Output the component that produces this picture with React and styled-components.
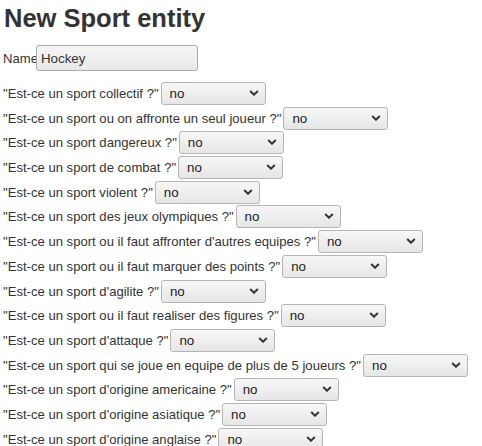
import React, { useState } from 'react'
import styled, { createGlobalStyle } from 'styled-components'

const QUESTIONS = [
  'Est-ce un sport collectif ?',
  'Est-ce un sport ou on affronte un seul joueur ?',
  'Est-ce un sport dangereux ?',
  'Est-ce un sport de combat ?',
  'Est-ce un sport violent ?',
  'Est-ce un sport des jeux olympiques ?',
  "Est-ce un sport ou il faut affronter d'autres equipes ?",
  'Est-ce un sport ou il faut marquer des points ?',
  "Est-ce un sport d'agilite ?",
  'Est-ce un sport ou il faut realiser des figures ?',
  "Est-ce un sport d'attaque ?",
  'Est-ce un sport qui se joue en equipe de plus de 5 joueurs ?',
  "Est-ce un sport d'origine americaine ?",
  "Est-ce un sport d'origine asiatique ?",
  "Est-ce un sport d'origine anglaise ?",
]

const GlobalStyle = createGlobalStyle`
  html, body {
    margin: 0;
    padding: 0;
    overflow: hidden;
    background: #fff;
  }
  body {
    font-family: "Liberation Sans", Arial, sans-serif;
    color: #333;
  }
`

const Page = styled.div`
  padding: 4px 3px 0 3px;
`

const Title = styled.h1`
  margin: 0 0 13px 1px;
  font-size: 25.5px;
  font-weight: bold;
  color: #333;
  line-height: 28px;
`

const Field = styled.div`
  display: flex;
  align-items: center;
  font-size: 13.1px;
  white-space: pre;
  margin-bottom: ${props => props.spacing || 1.7}px;
`

const Label = styled.span`
  margin-right: ${props => props.gap || 0}px;
`

const TextInput = styled.input`
  box-sizing: border-box;
  width: 162px;
  height: 26px;
  padding: 0 4px;
  margin: 0 0 0 -2px;
  border: 1px solid #aaa;
  border-radius: 3px;
  background: linear-gradient(#f6f6f6, #e9e9e9);
  font-family: "Liberation Sans", Arial, sans-serif;
  font-size: 13.33px;
  color: #333;
  outline: none;
  caret-color: #000;
`

const SelectWrap = styled.div`
  position: relative;
  display: inline-flex;
`

const Select = styled.select`
  appearance: none;
  -webkit-appearance: none;
  box-sizing: border-box;
  width: 105px;
  height: 23px;
  margin: 0;
  padding: 0 20px 0 8px;
  border: 1px solid #b5b5b5;
  border-radius: 3px;
  background: linear-gradient(#f7f7f7, #e6e6e6);
  font-family: "Liberation Sans", Arial, sans-serif;
  font-size: 13.33px;
  color: #222;
  outline: none;
`

const Chevron = styled.svg`
  position: absolute;
  right: 7px;
  top: 8px;
  width: 10px;
  height: 6px;
  pointer-events: none;
`

function Question({ label }) {
  const [value, setValue] = useState('no')
  return (
    <Field>
      <Label gap={2}>"{label}"</Label>
      <SelectWrap>
        <Select value={value} onChange={e => setValue(e.target.value)}>
          <option value="no">no</option>
          <option value="yes">yes</option>
        </Select>
        <Chevron viewBox="0 0 10 6">
          <path d="M1.2 1 L5 4.7 L8.8 1" fill="none" stroke="#333" strokeWidth="2" />
        </Chevron>
      </SelectWrap>
    </Field>
  )
}

export default function App() {
  const [name, setName] = useState('Hockey')
  return (
    <Page>
      <GlobalStyle />
      <Title>New Sport entity</Title>
      <Field spacing={11}>
        <Label>Name</Label>
        <TextInput value={name} onChange={e => setName(e.target.value)} autoFocus />
      </Field>
      {QUESTIONS.map((q, i) => (
        <Question label={q} key={i} />
      ))}
    </Page>
  )
}
